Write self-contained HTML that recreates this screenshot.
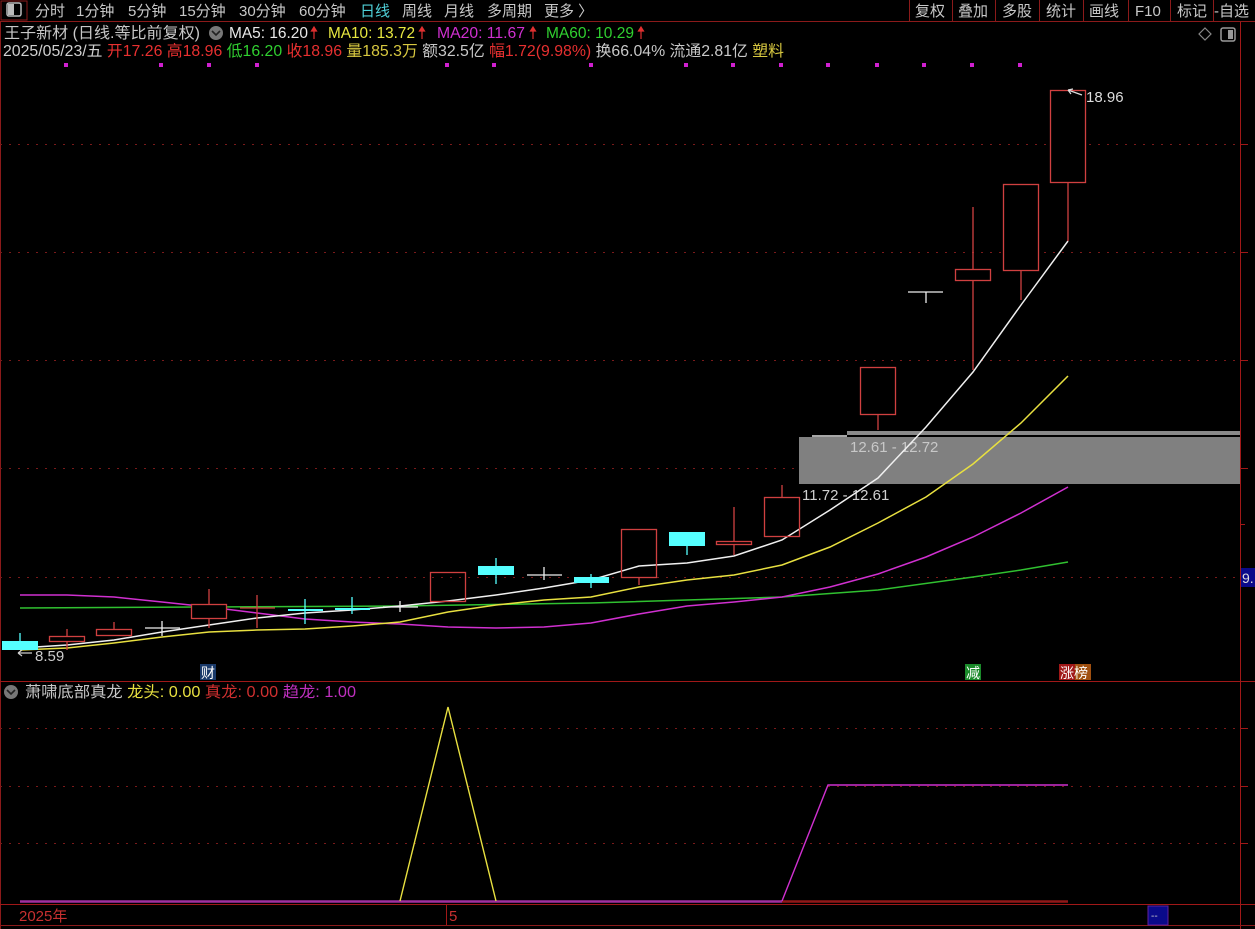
<!DOCTYPE html>
<html><head><meta charset="utf-8"><style>
html,body{margin:0;padding:0;background:#000;width:1255px;height:929px;overflow:hidden;font-family:"Liberation Sans","Noto Sans CJK SC",sans-serif;}
svg{position:absolute;left:0;top:0}
text{font-family:"Liberation Sans","Noto Sans CJK SC",sans-serif}
</style></head><body>
<svg width="1255" height="929" viewBox="0 0 1255 929">
<!-- top bar -->
<rect x="0" y="0" width="1255" height="21" fill="#000"/>
<line x1="0" y1="21.5" x2="1255" y2="21.5" stroke="#8b1a1a"/>
<rect x="1" y="1" width="26" height="19" fill="none" stroke="#8b1a1a"/>
<rect x="7" y="3" width="14" height="13" rx="2" fill="none" stroke="#bbb" stroke-width="1.5"/>
<rect x="8" y="4" width="6" height="11" fill="#bbb"/>
<g font-size="15" fill="#c8c8c8">
<text x="35" y="16">分时</text><text x="76" y="16">1分钟</text><text x="128" y="16">5分钟</text><text x="179" y="16">15分钟</text><text x="239" y="16">30分钟</text><text x="299" y="16">60分钟</text>
<text x="360" y="16" fill="#4fd0d8">日线</text><text x="402" y="16">周线</text><text x="444" y="16">月线</text><text x="487" y="16">多周期</text><text x="544" y="16">更多 〉</text>
<text x="915" y="16">复权</text><text x="958" y="16">叠加</text><text x="1002" y="16">多股</text><text x="1046" y="16">统计</text><text x="1089" y="16">画线</text><text x="1135" y="16">F10</text><text x="1177" y="16">标记</text><text x="1214" y="16">-自选</text>
</g>
<g stroke="#8b1a1a"><line x1="909.5" y1="0" x2="909.5" y2="21"/><line x1="952.5" y1="0" x2="952.5" y2="21"/><line x1="995.5" y1="0" x2="995.5" y2="21"/><line x1="1039.5" y1="0" x2="1039.5" y2="21"/><line x1="1083.5" y1="0" x2="1083.5" y2="21"/><line x1="1128.5" y1="0" x2="1128.5" y2="21"/><line x1="1170.5" y1="0" x2="1170.5" y2="21"/><line x1="1213.5" y1="0" x2="1213.5" y2="21"/></g>

<!-- frame -->
<line x1="1240.5" y1="22" x2="1240.5" y2="929" stroke="#a01818"/>
<line x1="0.5" y1="22" x2="0.5" y2="929" stroke="#8b1a1a"/>
<line x1="0" y1="681.5" x2="1255" y2="681.5" stroke="#a01818"/>
<line x1="0" y1="904.5" x2="1255" y2="904.5" stroke="#a01818"/>
<line x1="0" y1="925.5" x2="1255" y2="925.5" stroke="#8b1a1a"/>
<!-- grid -->
<g stroke="#7a1a1a" stroke-dasharray="2,7">
<line x1="0" y1="144.5" x2="1240" y2="144.5"/><line x1="0" y1="252.5" x2="1240" y2="252.5"/><line x1="0" y1="360.5" x2="1240" y2="360.5"/><line x1="0" y1="468.5" x2="1240" y2="468.5"/><line x1="0" y1="577.5" x2="1240" y2="577.5"/>
<line x1="0" y1="728.5" x2="1240" y2="728.5"/><line x1="0" y1="786.5" x2="1240" y2="786.5"/><line x1="0" y1="843.5" x2="1240" y2="843.5"/>
</g>
<g stroke="#a01818"><line x1="1240" y1="144.5" x2="1248" y2="144.5"/><line x1="1240" y1="252.5" x2="1248" y2="252.5"/><line x1="1240" y1="360.5" x2="1248" y2="360.5"/><line x1="1240" y1="468.5" x2="1248" y2="468.5"/><line x1="1240" y1="524.5" x2="1245" y2="524.5"/><line x1="1240" y1="728.5" x2="1248" y2="728.5"/><line x1="1240" y1="786.5" x2="1248" y2="786.5"/><line x1="1240" y1="843.5" x2="1248" y2="843.5"/></g>
<rect x="1241" y="568" width="14" height="19" fill="#0a0a8a"/>
<text x="1242" y="583" font-size="14" fill="#ddd">9.</text>

<!-- header texts -->
<g font-size="15.5">
<text x="4" y="38" fill="#c8c8c8" textLength="196" lengthAdjust="spacingAndGlyphs">王子新材 (日线.等比前复权)</text>
<circle cx="216" cy="33" r="7" fill="#777"/><path d="M212 31 L216 35 L220 31" stroke="#222" stroke-width="1.6" fill="none"/>
<text x="229" y="38" fill="#e8e8e8" textLength="79" lengthAdjust="spacingAndGlyphs">MA5: 16.20</text>
<text x="328" y="38" fill="#e8e840" textLength="87" lengthAdjust="spacingAndGlyphs">MA10: 13.72</text>
<text x="437" y="38" fill="#d030d0" textLength="88" lengthAdjust="spacingAndGlyphs">MA20: 11.67</text>
<text x="546" y="38" fill="#30d030" textLength="88" lengthAdjust="spacingAndGlyphs">MA60: 10.29</text>
<text x="3" y="56" fill="#d0d0d0" textLength="781" lengthAdjust="spacingAndGlyphs">2025/05/23/五 <tspan fill="#e83030">开17.26 高18.96 </tspan><tspan fill="#30d030">低16.20 </tspan><tspan fill="#e83030">收18.96 </tspan><tspan fill="#d8c840">量185.3万 </tspan><tspan fill="#c8c8c8">额32.5亿 </tspan><tspan fill="#e83030">幅1.72(9.98%) </tspan><tspan fill="#c8c8c8">换66.04% 流通2.81亿 </tspan><tspan fill="#d8c840">塑料</tspan></text>
</g>
<g stroke="#e03030" stroke-width="1.2" fill="#e03030">
<line x1="314" y1="28" x2="314" y2="39"/><path d="M311.5 31 L314 27 L316.5 31Z"/>
<line x1="422" y1="28" x2="422" y2="39"/><path d="M419.5 31 L422 27 L424.5 31Z"/>
<line x1="533" y1="28" x2="533" y2="39"/><path d="M530.5 31 L533 27 L535.5 31Z"/>
<line x1="641" y1="28" x2="641" y2="39"/><path d="M638.5 31 L641 27 L643.5 31Z"/>
</g>
<path d="M1205 28 L1211 34 L1205 40 L1199 34 Z" fill="none" stroke="#888" stroke-width="1.2"/>
<rect x="1221" y="28" width="14" height="13" rx="2" fill="none" stroke="#999" stroke-width="1.5"/><rect x="1228" y="30" width="5" height="9" fill="#999"/>
<g fill="#d020d0">
<rect x="64" y="63" width="4" height="4"/><rect x="159" y="63" width="4" height="4"/><rect x="207" y="63" width="4" height="4"/><rect x="255" y="63" width="4" height="4"/><rect x="445" y="63" width="4" height="4"/><rect x="492" y="63" width="4" height="4"/><rect x="589" y="63" width="4" height="4"/><rect x="684" y="63" width="4" height="4"/><rect x="731" y="63" width="4" height="4"/><rect x="779" y="63" width="4" height="4"/><rect x="826" y="63" width="4" height="4"/><rect x="875" y="63" width="4" height="4"/><rect x="922" y="63" width="4" height="4"/><rect x="970" y="63" width="4" height="4"/><rect x="1018" y="63" width="4" height="4"/>
</g>

<!-- gray zone -->
<rect x="799" y="437" width="441" height="47" fill="#808080"/>
<rect x="847" y="431" width="393" height="4" fill="#8a8a8a"/>
<line x1="812" y1="436" x2="847" y2="436" stroke="#ddd" stroke-width="1.5"/>
<text x="850" y="452" font-size="15" fill="#c8c8c8">12.61 - 12.72</text>
<text x="802" y="500" font-size="15" fill="#d0d0d0">11.72 - 12.61</text>

<!-- MA lines -->
<g fill="none" stroke-width="1.5">
<polyline stroke="#30c030" points="20,608 400,606 591,603 687,600 782,597 878,590 973,577 1021,570 1068,562"/>
<polyline stroke="#d030d0" points="20,595 67,595 114,597 162,602 209,607 257,613 305,619 352,622 400,624 448,627 496,628 544,627 591,623 639,614 687,606 734,602 782,597 830,587 878,574 926,557 973,537 1021,513 1068,487"/>
<polyline stroke="#e8e040" points="20,650 67,648 114,643 162,637 209,632 257,630 305,629 352,626 400,622 448,612 496,605 544,600 591,597 639,587 687,580 734,575 782,565 830,547 878,523 926,497 973,464 1021,423 1068,376"/>
<polyline stroke="#f0f0f0" points="20,648 67,645 114,640 162,632 209,625 257,618 305,613 352,610 400,606 448,601 496,595 544,588 591,580 639,566 687,563 734,556 782,540 830,510 878,478 926,427 973,372 1021,305 1068,241"/>
</g>

<!-- candles -->
<g stroke-width="1.3">
<line x1="20" y1="633" x2="20" y2="650" stroke="#5ff"/><rect x="2" y="641" width="36" height="9" fill="#5ff"/>
<line x1="67" y1="629" x2="67" y2="650" stroke="#d04040"/><rect x="49.5" y="636.5" width="35" height="5" fill="#000" stroke="#d04040"/>
<line x1="114" y1="622" x2="114" y2="636" stroke="#d04040"/><rect x="96.5" y="629.5" width="35" height="6" fill="#000" stroke="#d04040"/>
<line x1="162" y1="621" x2="162" y2="636" stroke="#eee"/><line x1="145" y1="628" x2="180" y2="628" stroke="#eee"/>
<line x1="209" y1="589" x2="209" y2="628" stroke="#d04040"/><rect x="191.5" y="604.5" width="35" height="14" fill="#000" stroke="#d04040"/>
<line x1="257" y1="595" x2="257" y2="628" stroke="#d04040"/><line x1="240" y1="608" x2="275" y2="608" stroke="#d04040"/>
<line x1="305" y1="599" x2="305" y2="624" stroke="#5ff"/><rect x="288" y="609" width="35" height="2" fill="#5ff"/>
<line x1="352" y1="597" x2="352" y2="614" stroke="#5ff"/><rect x="335" y="608" width="35" height="2" fill="#5ff"/>
<line x1="400" y1="601" x2="400" y2="612" stroke="#eee"/><line x1="383" y1="607" x2="418" y2="607" stroke="#eee"/>
<rect x="430.5" y="572.5" width="35" height="29" fill="none" stroke="#d04040"/>
<line x1="496" y1="558" x2="496" y2="584" stroke="#5ff"/><rect x="478" y="566" width="36" height="9" fill="#5ff"/>
<line x1="544" y1="567" x2="544" y2="580" stroke="#eee"/><line x1="527" y1="575" x2="562" y2="575" stroke="#eee"/>
<line x1="591" y1="574" x2="591" y2="588" stroke="#5ff"/><rect x="574" y="577" width="35" height="6" fill="#5ff"/>
<line x1="639" y1="578" x2="639" y2="585" stroke="#d04040"/><rect x="621.5" y="529.5" width="35" height="48" fill="none" stroke="#d04040"/>
<line x1="687" y1="532" x2="687" y2="555" stroke="#5ff"/><rect x="669" y="532" width="36" height="14" fill="#5ff"/>
<line x1="734" y1="507" x2="734" y2="555" stroke="#d04040"/><rect x="716.5" y="541.5" width="35" height="3" fill="#000" stroke="#d04040"/>
<line x1="782" y1="485" x2="782" y2="497" stroke="#d04040"/><rect x="764.5" y="497.5" width="35" height="39" fill="none" stroke="#d04040"/>
<line x1="878" y1="415" x2="878" y2="430" stroke="#d04040"/><rect x="860.5" y="367.5" width="35" height="47" fill="none" stroke="#d04040"/>
<line x1="926" y1="292" x2="926" y2="303" stroke="#eee"/><line x1="908" y1="292" x2="943" y2="292" stroke="#eee"/>
<line x1="973" y1="207" x2="973" y2="370" stroke="#d04040"/><rect x="955.5" y="269.5" width="35" height="11" fill="#000" stroke="#d04040"/>
<line x1="1021" y1="271" x2="1021" y2="300" stroke="#d04040"/><rect x="1003.5" y="184.5" width="35" height="86" fill="#000" stroke="#d04040"/>
<line x1="1068" y1="183" x2="1068" y2="241" stroke="#d04040"/><rect x="1050.5" y="90.5" width="35" height="92" fill="#000" stroke="#d04040"/>
</g>
<path d="M1068 90 L1082 95 M1068 90 L1073 89 M1068 90 L1071 94" stroke="#ddd" stroke-width="1.2" fill="none"/>
<text x="1086" y="102" font-size="15" fill="#ddd">18.96</text>
<path d="M18 653 L32 653 M18 653 L22 650 M18 653 L22 656" stroke="#ccc" stroke-width="1.2" fill="none"/>
<text x="35" y="661" font-size="15" fill="#ccc">8.59</text>

<!-- markers -->
<rect x="200" y="664" width="16" height="16" fill="#1a3a6a"/><text x="201" y="678" font-size="14" fill="#fff">财</text>
<rect x="965" y="664" width="16" height="16" fill="#1a8a2a"/><text x="966" y="678" font-size="14" fill="#fff">减</text>
<rect x="1059" y="664" width="16" height="16" fill="#a01818"/><rect x="1075" y="664" width="16" height="16" fill="#a05010"/><text x="1060" y="678" font-size="14" fill="#fff">涨榜</text>

<!-- indicator pane -->
<circle cx="11" cy="692" r="7" fill="#777"/><path d="M7 690 L11 694 L15 690" stroke="#222" stroke-width="1.6" fill="none"/>
<text x="25" y="697" font-size="15.5" fill="#c8c8c8" textLength="331" lengthAdjust="spacingAndGlyphs">萧啸底部真龙 <tspan fill="#e8e040">龙头: 0.00 </tspan><tspan fill="#d03030">真龙: 0.00 </tspan><tspan fill="#c030c0">趋龙: 1.00</tspan></text>
<line x1="20" y1="901.5" x2="782" y2="901.5" stroke="#a030a0" stroke-width="2.5"/>
<line x1="782" y1="901.5" x2="1068" y2="901.5" stroke="#901818" stroke-width="2.5"/>
<polyline points="400,901 448,707 496,901" fill="none" stroke="#e8e040" stroke-width="1.4"/>
<polyline points="782,901 828,785 1068,785" fill="none" stroke="#d030d0" stroke-width="1.4"/>

<!-- time axis -->
<text x="19" y="921" font-size="15" fill="#c83030">2025年</text>
<line x1="446.5" y1="905" x2="446.5" y2="925" stroke="#a01818"/>
<text x="449" y="921" font-size="15" fill="#c83030">5</text>
<rect x="1148" y="906" width="20" height="19" fill="#0a0a8a" stroke="#6020a0"/>
<text x="1151" y="919" font-size="10" fill="#ccc">--</text>
</svg>
</body></html>
